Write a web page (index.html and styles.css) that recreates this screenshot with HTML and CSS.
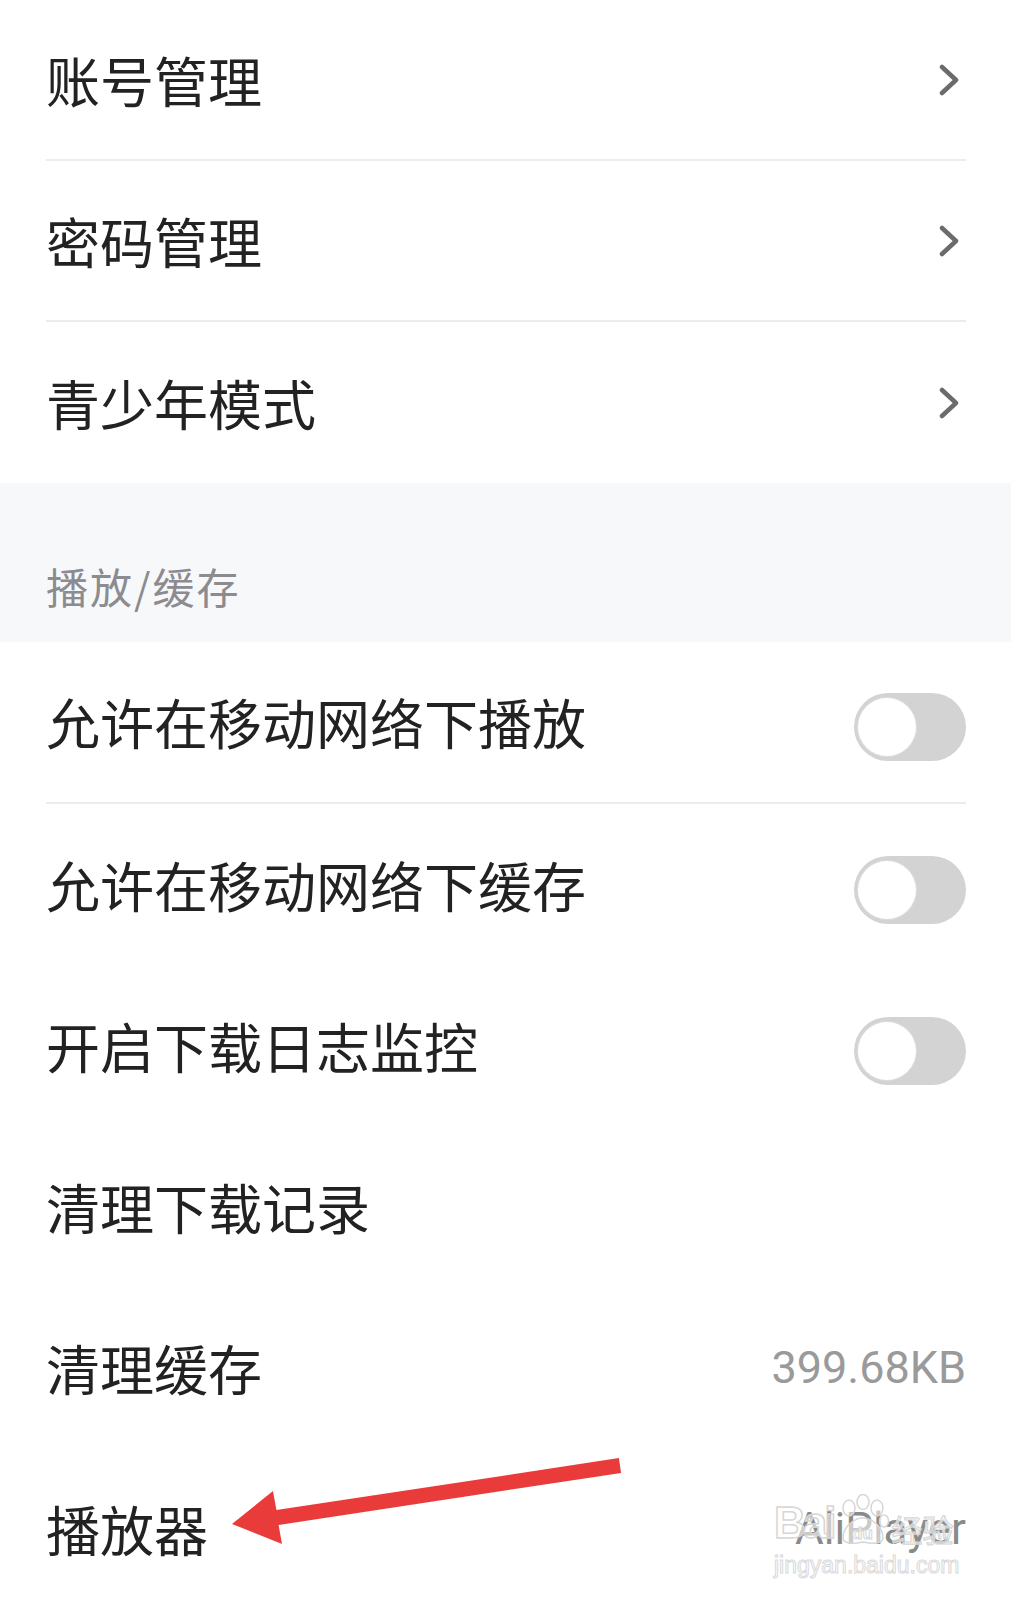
FILE: index.html
```html
<!DOCTYPE html>
<html lang="zh-CN">
<head>
    <meta charset="UTF-8">
    <meta name="viewport" content="width=device-width, initial-scale=1.0">
    <title>设置</title>
    <link rel="stylesheet" href="styles.css">
</head>
<body>
    <div class="group">
        <div class="row first-group divided">
            <span class="label">账号管理</span>
            <svg class="chevron" viewBox="0 0 20 32"><polyline points="3,3 17,16 3,29" /></svg>
        </div>
        <div class="row first-group divided">
            <span class="label">密码管理</span>
            <svg class="chevron" viewBox="0 0 20 32"><polyline points="3,3 17,16 3,29" /></svg>
        </div>
        <div class="row first-group">
            <span class="label">青少年模式</span>
            <svg class="chevron" viewBox="0 0 20 32"><polyline points="3,3 17,16 3,29" /></svg>
        </div>
    </div>

    <div class="section-title">播放/缓存</div>

    <div class="group">
        <div class="row divided">
            <span class="label">允许在移动网络下播放</span>
            <span class="switch"><span class="knob"></span></span>
        </div>
        <div class="row">
            <span class="label">允许在移动网络下缓存</span>
            <span class="switch"><span class="knob"></span></span>
        </div>
        <div class="row">
            <span class="label">开启下载日志监控</span>
            <span class="switch"><span class="knob"></span></span>
        </div>
        <div class="row">
            <span class="label">清理下载记录</span>
        </div>
        <div class="row">
            <span class="label">清理缓存</span>
            <span class="value">399.68KB</span>
        </div>
        <div class="row">
            <span class="label">播放器</span>
            <span class="value player">AliPlayer</span>
        </div>
    </div>

    <!-- red annotation arrow -->
    <svg class="arrow" width="410" height="110" viewBox="0 0 410 110">
        <polygon points="12,79 53,46 56.4,65.1 398.9,13.1 401.1,27.9 58.6,79.9 62,99" />
    </svg>

    <!-- baidu jingyan watermark -->
    <div class="watermark">
        <div class="wm-top">
            <span class="wm-bai">Bai</span>
            <svg class="wm-paw" width="52" height="52" viewBox="0 0 52 52">
                <ellipse cx="12" cy="14" rx="6" ry="8" />
                <ellipse cx="26" cy="8" rx="6" ry="7.5" />
                <ellipse cx="40" cy="14" rx="6" ry="8" />
                <ellipse cx="47" cy="27" rx="4.5" ry="6" />
                <path d="M6 44 C6 32 18 24 26 24 C34 24 46 32 46 44 C46 50 36 50 26 48 C16 50 6 50 6 44 Z" />
                <text x="15" y="45">du</text>
            </svg>
            <span class="wm-jy">经验</span>
        </div>
        <div class="wm-url">jingyan.baidu.com</div>
    </div>
</body>
</html>
```

FILE: styles.css
```css
body {
    margin: 0;
    background: #ffffff;
    font-family: 'Noto Sans CJK SC', 'Noto Sans', sans-serif;
    color: #222222;
    position: relative;
    overflow: hidden;
}
.group {
    background: #ffffff;
}
.row {
    box-sizing: border-box;
    height: 161px;
    margin: 0 45px 0 46px;
    display: flex;
    align-items: center;
    justify-content: space-between;
}
.row.divided {
    height: 162px;
}
.row.first-group {
    height: 161px;
}
.divided {
    border-bottom: 2px solid #ececec;
}
.label {
    font-size: 54px;
    line-height: 1;
    color: #222222;
}
.chevron {
    width: 20px;
    height: 32px;
    margin-right: 7px;
    fill: none;
    stroke: #6b6b6b;
    stroke-width: 4.5;
    stroke-linecap: round;
    stroke-linejoin: round;
}
.section-title {
    box-sizing: border-box;
    height: 159px;
    background: #f7f8fa;
    padding: 82px 0 0 46px;
    font-size: 42px;
    letter-spacing: 2px;
    line-height: 1;
    color: #8b8b90;
}
.switch {
    width: 112px;
    height: 68px;
    margin-top: 10px;
    border-radius: 34px;
    background: #d3d3d3;
    display: flex;
    align-items: center;
    padding-left: 4px;
    box-sizing: border-box;
}
.knob {
    width: 58px;
    height: 58px;
    border-radius: 50%;
    background: #ffffff;
    box-shadow: 0 0 0 1px #dcdcdc;
}
.value {
    font-family: Roboto, 'Liberation Sans', sans-serif;
    font-size: 45px;
    line-height: 1;
    color: #9a9a9a;
}
.value.player {
    font-size: 44px;
    color: #8a8a8a;
}
.arrow {
    position: absolute;
    left: 220px;
    top: 1445px;
}
.arrow polygon {
    fill: #ea3b3b;
}
.watermark {
    position: absolute;
    left: 774px;
    top: 1488px;
    color: rgba(255, 255, 255, 0.55);
    white-space: nowrap;
}
.wm-top {
    display: flex;
    align-items: flex-end;
    height: 58px;
}
.wm-bai {
    font-family: 'Liberation Sans', sans-serif;
    font-size: 44px;
    font-weight: bold;
    letter-spacing: -3px;
    line-height: 1;
    -webkit-text-stroke: 1.5px #d6d6d6;
    margin-bottom: 1px;
}
.wm-paw {
    margin: 0 2px 0 4px;
}
.wm-paw ellipse, .wm-paw path {
    fill: rgba(255, 255, 255, 0.55);
    stroke: #d6d6d6;
    stroke-width: 1.5;
}
.wm-paw text {
    font-family: 'Liberation Sans', sans-serif;
    font-size: 17px;
    font-weight: bold;
    fill: rgba(255, 255, 255, 0.6);
    stroke: #d6d6d6;
    stroke-width: 1;
}
.wm-jy {
    font-size: 31px;
    line-height: 1;
    -webkit-text-stroke: 1.2px #d6d6d6;
    margin-bottom: 2px;
}
.wm-url {
    font-family: 'Liberation Sans', sans-serif;
    font-size: 23px;
    line-height: 1;
    margin-top: 8px;
    color: rgba(255, 255, 255, 0.6);
    -webkit-text-stroke: 1px #d9d9d9;
}
```
